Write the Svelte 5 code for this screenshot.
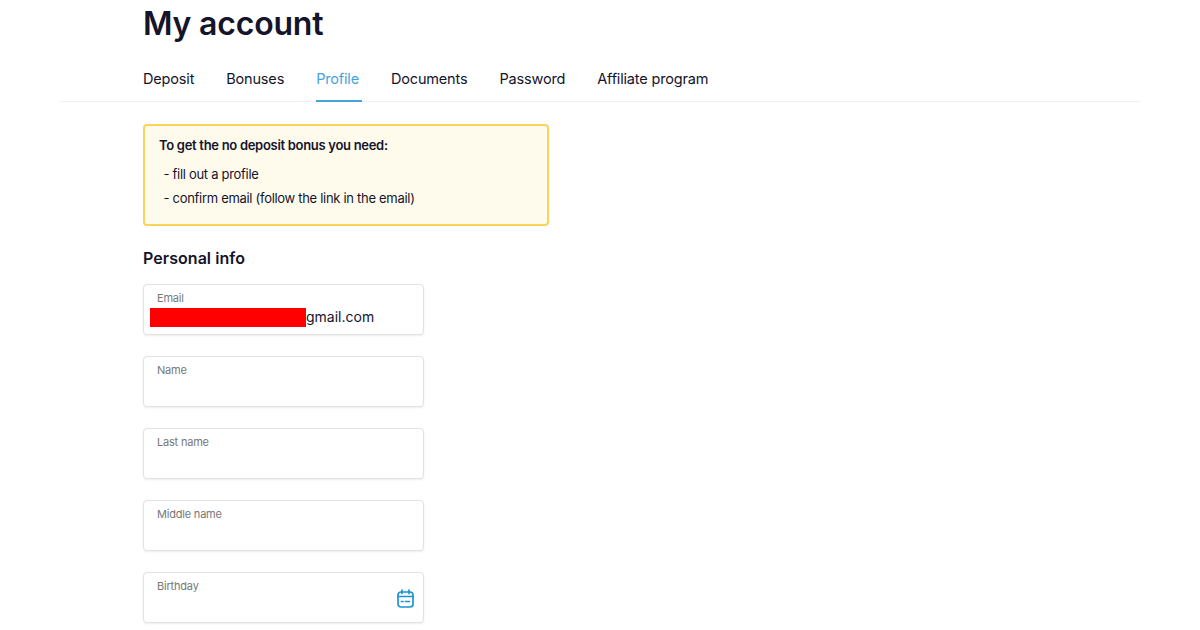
<script>
  const tabs = [
    { label: 'Deposit' },
    { label: 'Bonuses' },
    { label: 'Profile', active: true },
    { label: 'Documents' },
    { label: 'Password' },
    { label: 'Affiliate program' }
  ];
  const fields = ['Name', 'Last name', 'Middle name'];
</script>

<div class="page">
  <h1>My account</h1>
  <nav class="tabs">
    {#each tabs as tab}
      <span class="tab" class:active={tab.active}>{tab.label}</span>
    {/each}
  </nav>
  <div class="content">
    <section class="notice">
      <p class="notice-title">To get the no deposit bonus you need:</p>
      <p class="notice-item">- fill out a profile</p>
      <p class="notice-item">- confirm email (follow the link in the email)</p>
    </section>
    <h2>Personal info</h2>
    <div class="field">
      <span class="label">Email</span>
      <div class="value"><span class="redact"></span><span class="domain">gmail.com</span></div>
    </div>
    {#each fields as f}
      <div class="field"><span class="label">{f}</span></div>
    {/each}
    <div class="field">
      <span class="label">Birthday</span>
      <svg class="cal" viewBox="0 0 17 19" width="17" height="19" fill="none" stroke="#1f93d2" stroke-width="1.7" stroke-linecap="round" stroke-linejoin="round">
        <rect x="1" y="3" width="15" height="15" rx="3" />
        <path d="M5 1v3.5M12 1v3.5M1 7.5h15" />
        <path d="M4.5 12.5h1.5M8.5 12.5h4" />
      </svg>
    </div>
  </div>
</div>

<style>
  :global(body) {
    margin: 0;
    background: #fff;
    overflow: hidden;
  }
  .page {
    width: 1079px;
    margin-left: 61px;
    height: 630px;
    overflow: hidden;
    font-family: "Inter", "Roboto", sans-serif;
    color: #14142b;
  }
  h1 {
    margin: 0;
    padding: 5px 0 0 82px;
    font-size: 32px;
    line-height: 38px;
    font-weight: 600;
    letter-spacing: -0.2px;
  }
  .tabs {
    display: flex;
    gap: 32px;
    margin-top: 20px;
    padding-left: 82px;
    border-bottom: 1px solid #eef0f2;
    height: 38px;
  }
  .tab {
    position: relative;
    font-size: 14.5px;
    letter-spacing: -0.17px;
    line-height: 32px;
    height: 38px;
  }
  .tab.active {
    color: #45a3dc;
  }
  .tab.active::after {
    content: "";
    position: absolute;
    left: 0;
    right: -3px;
    bottom: -1px;
    height: 2px;
    background: #45a3dc;
  }
  .content {
    padding: 22px 0 0 82px;
  }
  .notice {
    width: 406px;
    height: 102px;
    box-sizing: border-box;
    padding: 10px 14px;
    background: #fffbec;
    border: 2px solid #fbd35c;
    border-radius: 4px;
  }
  .notice p {
    margin: 0;
    font-size: 13px;
    line-height: 18px;
    letter-spacing: -0.3px;
  }
  .notice .notice-title {
    font-weight: 600;
    margin-bottom: 11px;
  }
  .notice .notice-item {
    padding-left: 4.5px;
    margin-bottom: 6px;
  }
  h2 {
    margin: 22px 0 16px;
    font-size: 16px;
    line-height: 20px;
    font-weight: 600;
    letter-spacing: 0.05px;
  }
  .field {
    position: relative;
    width: 281px;
    height: 51px;
    box-sizing: border-box;
    margin-bottom: 21px;
    padding: 7px 13px;
    background: #fff;
    border: 1px solid #e0e2e6;
    border-radius: 4px;
    box-shadow: 0 1px 2px rgba(20, 20, 43, 0.08);
  }
  .label {
    display: block;
    font-size: 11px;
    line-height: 13px;
    letter-spacing: -0.2px;
    color: #777;
  }
  .value {
    display: flex;
    align-items: center;
    margin: 3px 0 0 -7px;
    height: 19px;
    font-size: 14px;
    line-height: 18px;
  }
  .domain {
    padding-bottom: 2px;
  }
  .redact {
    width: 156px;
    height: 19px;
    background: #ff0000;
  }
  .cal {
    position: absolute;
    right: 9px;
    top: 16px;
  }
</style>
